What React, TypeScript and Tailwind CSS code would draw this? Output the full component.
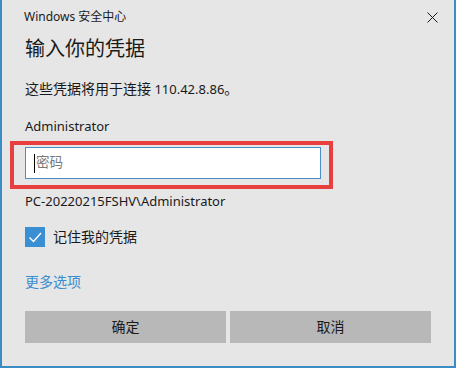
export default function App() {
  return (
    <div className="relative w-[456px] h-[368px] bg-[#e6e6e6] border-l-2 border-r-2 border-b-2 border-[#3b8cc4] overflow-hidden text-[#1a1a1a] font-['Noto_Sans','Noto_Sans_CJK_SC',sans-serif]">
      <div className="flex items-center justify-between h-[34px] pl-[22px] pr-[16px]">
        <span className="text-[12px] leading-none">Windows 安全中心</span>
        <svg width="11" height="11" viewBox="0 0 11 11">
          <path d="M0.5 0.5L10.5 10.5M10.5 0.5L0.5 10.5" stroke="#1a1a1a" strokeWidth="1" />
        </svg>
      </div>
      <div className="px-[23px] flex flex-col">
        <div className="h-[30px] flex items-center text-[20px] leading-none">输入你的凭据</div>
        <div className="mt-[14px] h-[22px] flex items-center text-[13px] leading-none">
          <span className="text-[14px]">这些凭据将用于连接</span>
          <span>&nbsp;110.42.8.86</span>
          <span className="text-[14px]">。</span>
        </div>
        <div className="mt-[15px] h-[22px] flex items-center text-[13px] leading-none">Administrator</div>
        <div className="mt-[10px] h-[32px] w-[296px] bg-white border border-[#4a8fc7] flex items-center pl-[8px]">
          <span className="w-px h-[19px] bg-black" />
          <span className="ml-[1px] text-[13.5px] leading-none text-[#7a7a7a]">密码</span>
        </div>
        <div className="mt-[11px] h-[22px] flex items-center text-[13px] leading-none">PC-20220215FSHV\Administrator</div>
        <div className="mt-[15px] h-[20px] flex items-center">
          <span className="w-[20px] h-[20px] bg-[#3a8fd3] flex items-center justify-center">
            <svg width="20" height="20" viewBox="0 0 20 20">
              <path d="M4.5 10.5L8.5 14.5L16 6" fill="none" stroke="#ffffff" strokeWidth="1.4" />
            </svg>
          </span>
          <span className="ml-[8px] text-[14px] leading-none">记住我的凭据</span>
        </div>
        <div className="mt-[24px] h-[22px] flex items-center text-[14px] leading-none text-[#3a8ccf]">更多选项</div>
        <div className="mt-[18px] grid grid-cols-2 gap-[4px] h-[32px]">
          <div className="bg-[#b8b8b8] flex items-center justify-center text-[14px] leading-none">确定</div>
          <div className="bg-[#b8b8b8] flex items-center justify-center text-[14px] leading-none">取消</div>
        </div>
      </div>
      <div className="absolute left-[8px] top-[141px] w-[323px] h-[48px] border-4 border-[#e8403f]" />
    </div>
  );
}
